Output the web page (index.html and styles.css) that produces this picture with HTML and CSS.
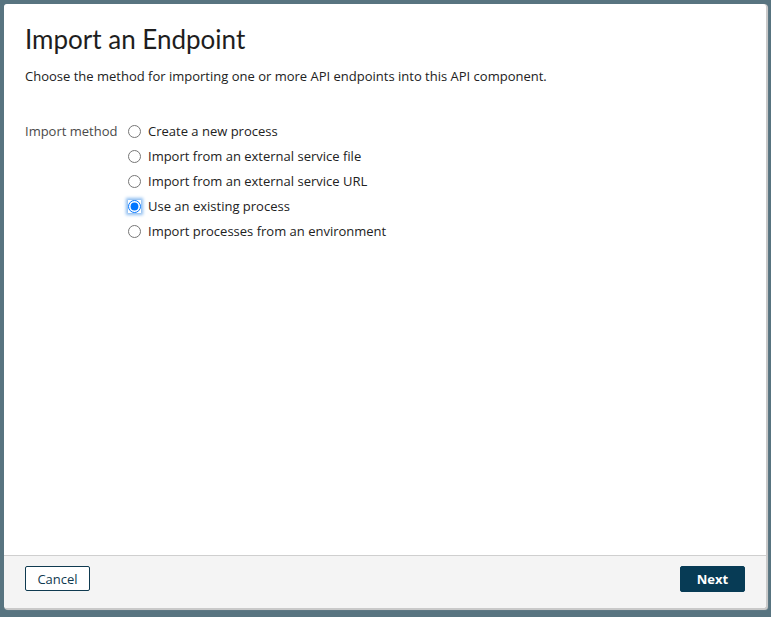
FILE: index.html
```html
<!DOCTYPE html>
<html>
<head>
<meta charset="utf-8">
<link rel="stylesheet" href="styles.css">
</head>
<body>
<div class="backdrop">
  <div class="dialog">
    <div class="body">
      <h1 class="title">Import an Endpoint</h1>
      <p class="desc">Choose the method for importing one or more API endpoints into this API component.</p>
      <div class="field">
        <div class="label">Import method</div>
        <div class="options">
          <label class="opt"><input type="radio" name="m"><span>Create a new process</span></label>
          <label class="opt"><input type="radio" name="m"><span>Import from an external service file</span></label>
          <label class="opt"><input type="radio" name="m"><span>Import from an external service URL</span></label>
          <label class="opt"><input type="radio" name="m" checked class="focus"><span>Use an existing process</span></label>
          <label class="opt"><input type="radio" name="m"><span>Import processes from an environment</span></label>
        </div>
      </div>
    </div>
    <div class="footer">
      <button class="btn cancel">Cancel</button>
      <button class="btn next">Next</button>
    </div>
  </div>
</div>
</body>
</html>
```

FILE: styles.css
```css
html, body {
  margin: 0;
  padding: 0;
  height: 100%;
}
body {
  background: #587480;
  font-family: "Open Sans", "Noto Sans", sans-serif;
}
.backdrop {
  height: 617px;
  box-sizing: border-box;
  padding: 4px 5px 9px 4px;
  display: flex;
}
.dialog {
  flex: 1;
  background: #fff;
  border-radius: 3px;
  box-shadow: 1px 1px 0 1px #c9c9c9, 2px 2px 1px #9aa5aa;
  display: flex;
  flex-direction: column;
  overflow: hidden;
}
.body {
  flex: 1;
  padding: 0 21px;
}
.title {
  margin: 21px 0 0;
  font-family: "Lato", sans-serif;
  font-weight: 400;
  font-size: 26px;
  line-height: 28px;
  color: #1e1e1e;
}
.desc {
  margin: 14px 0 0;
  font-size: 13px;
  line-height: 18px;
  color: #222;
}
.field {
  display: flex;
  margin-top: 38px;
}
.label {
  width: 103px;
  font-size: 13px;
  line-height: 17px;
  color: #4a4a4a;
}
.options {
  display: flex;
  flex-direction: column;
  gap: 8px;
}
.opt {
  display: flex;
  align-items: center;
  font-size: 13px;
  line-height: 17px;
  color: #222;
  height: 17px;
}
.opt input {
  margin: 0 7px 0 0;
  width: 13px;
  height: 13px;
}
.opt input.focus {
  outline: none;
  border-radius: 50%;
  box-shadow: 0 0 3px 2px #8dbdf0;
}
.footer {
  height: 53px;
  flex: none;
  box-sizing: border-box;
  background: #f4f4f4;
  border-top: 1px solid #cfcfcf;
  display: flex;
  align-items: flex-start;
  justify-content: space-between;
  padding: 10px 21px 0;
}
.btn {
  font-family: "Open Sans", sans-serif;
  font-size: 13px;
  height: 25px;
  width: 65px;
  border-radius: 2px;
  cursor: pointer;
}
.cancel {
  background: #fff;
  border: 1px solid #0f3a50;
  color: #0f3a50;
}
.next {
  background: #073b55;
  border: 1px solid #073b55;
  color: #fff;
  font-weight: 700;
  height: 26px;
}
```
